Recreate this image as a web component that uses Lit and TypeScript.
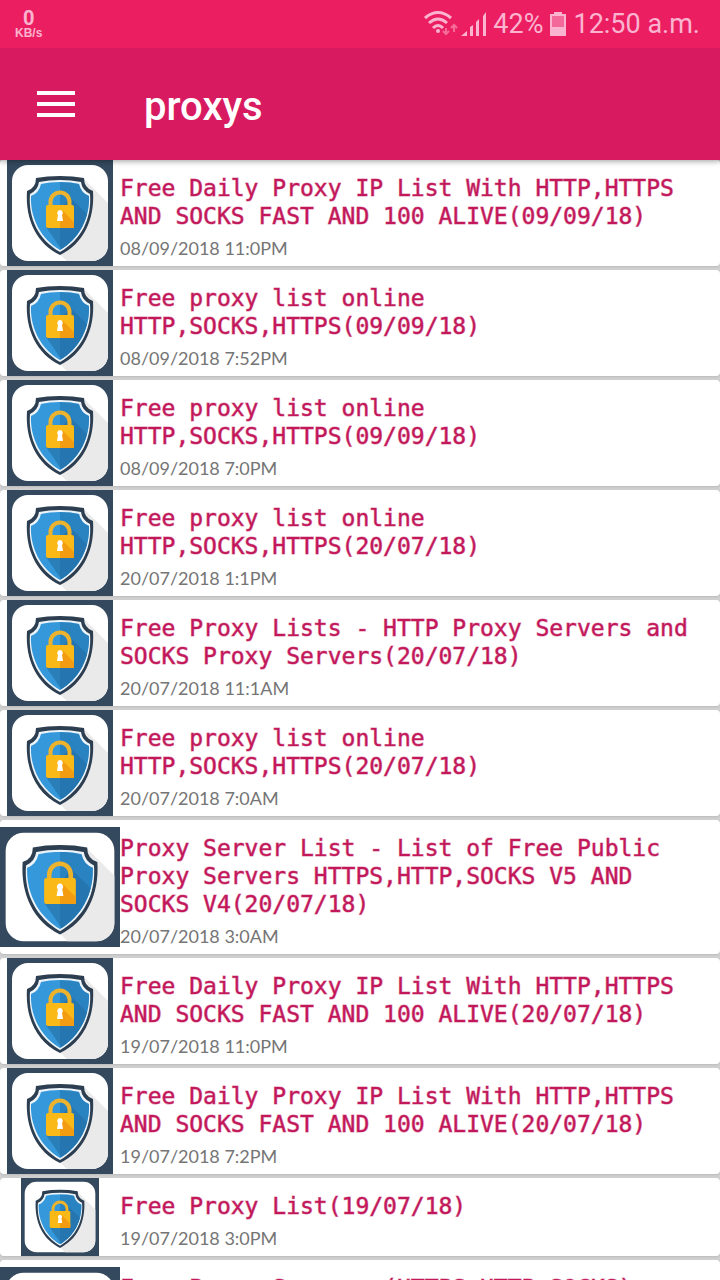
import { LitElement, html, css } from "lit";
import { customElement, property } from "lit/decorators.js";

interface Entry {
  title: string;
  date: string;
}

const ENTRIES: Entry[] = [
  { title: "Free Daily Proxy IP List With HTTP,HTTPS AND SOCKS FAST AND 100 ALIVE(09/09/18)", date: "08/09/2018 11:0PM" },
  { title: "Free proxy list online HTTP,SOCKS,HTTPS(09/09/18)", date: "08/09/2018 7:52PM" },
  { title: "Free proxy list online HTTP,SOCKS,HTTPS(09/09/18)", date: "08/09/2018 7:0PM" },
  { title: "Free proxy list online HTTP,SOCKS,HTTPS(20/07/18)", date: "20/07/2018 1:1PM" },
  { title: "Free Proxy Lists - HTTP Proxy Servers and SOCKS Proxy Servers(20/07/18)", date: "20/07/2018 11:1AM" },
  { title: "Free proxy list online HTTP,SOCKS,HTTPS(20/07/18)", date: "20/07/2018 7:0AM" },
  { title: "Proxy Server List - List of Free Public Proxy Servers HTTPS,HTTP,SOCKS V5 AND SOCKS V4(20/07/18)", date: "20/07/2018 3:0AM" },
  { title: "Free Daily Proxy IP List With HTTP,HTTPS AND SOCKS FAST AND 100 ALIVE(20/07/18)", date: "19/07/2018 11:0PM" },
  { title: "Free Daily Proxy IP List With HTTP,HTTPS AND SOCKS FAST AND 100 ALIVE(20/07/18)", date: "19/07/2018 7:2PM" },
  { title: "Free Proxy List(19/07/18)", date: "19/07/2018 3:0PM" },
  { title: "Free Proxy Servers (HTTPS,HTTP,SOCKS) Proxy Servers HTTPS,HTTP,SOCKS V5 AND SOCKS V4(19/07/18)", date: "19/07/2018 3:0PM" },
];

@customElement("shield-icon")
export class ShieldIcon extends LitElement {
  static styles = css`
    :host {
      display: flex;
      contain: size;
    }
    svg {
      flex: 1;
      min-width: 0;
      min-height: 0;
    }
  `;

  render() {
    return html`
      <svg viewBox="0 0 106 106" aria-hidden="true">
        <defs>
          <clipPath id="card"><rect x="5" y="5" width="96" height="96" rx="16" /></clipPath>
          <clipPath id="face">
            <path d="M53 22Q64 22 72 24Q74 33 82 36C83 58 72 79 53 90C34 79 23 58 24 36Q32 33 34 24Q42 22 53 22Z" />
          </clipPath>
        </defs>
        <rect width="106" height="106" fill="#34495e" />
        <rect x="5" y="5" width="96" height="96" rx="16" fill="#fff" />
        <path d="M76 18L112 54V112H70L53 94Z" fill="#eaeaeb" clip-path="url(#card)" />
        <path d="M53 16Q66 16 77 18Q77 28 86 31C88 60 76 84 53 95C30 84 18 60 20 31Q29 28 29 18Q40 16 53 16Z" fill="#2c3e50" />
        <path d="M53 20Q64 20 74 22Q75 30 83 34C85 59 74 80 53 92C32 80 21 59 23 34Q31 30 32 22Q42 20 53 20Z" fill="#ecf4fb" />
        <g clip-path="url(#face)">
          <rect width="106" height="106" fill="#3498db" />
          <path d="M63 37L106 80V106H66L39 67Z" fill="#2b7fb9" />
          <rect x="53" y="0" width="53" height="106" fill="#1f6da8" opacity=".5" />
        </g>
        <path d="M43.500 47V42a9.500 9.500 0 0 1 19 0V47" fill="none" stroke="#edb32d" stroke-width="4" />
        <rect x="39" y="45" width="28" height="23" rx="2" fill="#fbb917" />
        <path d="M56 51L67 62V68H53V60Z" fill="#f39c12" />
        <path d="M53 50a3 3 0 0 1 2 5l1 6h-6l1-6a3 3 0 0 1 2-5Z" fill="#fff" />
      </svg>
    `;
  }
}

@customElement("status-bar")
export class StatusBar extends LitElement {
  static styles = css`
    :host {
      display: flex;
      align-items: center;
      justify-content: space-between;
      height: 48px;
      padding: 0 20px 0 15px;
      background: #ec1e62;
      color: #fbb4cf;
      font-family: Roboto, "Liberation Sans", sans-serif;
    }
    .rate {
      display: grid;
      justify-items: center;
      font: bold 12px/12px "Liberation Sans", sans-serif;
    }
    .rate b {
      font: bold 20px/18px Roboto, sans-serif;
    }
    .right {
      display: flex;
      align-items: center;
      gap: 7px;
      font-size: 27px;
      line-height: 48px;
    }
    svg {
      flex: none;
    }
  `;

  render() {
    return html`
      <div class="rate"><b>0</b><span>KB/s</span></div>
      <div class="right">
        <svg width="62" height="28" viewBox="0 0 62 28" aria-hidden="true">
          <g fill="none" stroke="#fbb4cf" stroke-width="3">
            <path d="M1 8Q14-3 27 8" />
            <path d="M5 13Q14 5 23 13" />
            <path d="M9 18Q14 13 19 18" />
          </g>
          <circle cx="14" cy="21" r="2" fill="#fbb4cf" />
          <path d="M22 18v6m-3-3l3 3l3-3M30 22v-7m-3 3l3-3l3 3" fill="none" stroke="#f56c9b" stroke-width="2" />
          <path d="M37 26l6-5v5zM46 17l3-2v11h-3zM52 12l3-3v17h-3zM59 6l3-4v24h-3z" fill="#fbb4cf" />
        </svg>
        <span>42%</span>
        <svg width="16" height="24" viewBox="0 0 16 24" aria-hidden="true">
          <path d="M4 0h8v2h4v22H0V2h4z" fill="#fbb4cf" />
          <path d="M2 4h12v11H2z" fill="#f2699a" />
        </svg>
        <span>12:50 a.m.</span>
      </div>
    `;
  }
}

@customElement("proxy-card")
export class ProxyCard extends LitElement {
  @property({ attribute: false }) entry!: Entry;

  static styles = css`
    :host {
      display: block;
    }
    .card {
      display: grid;
      grid-template-columns: 120px minmax(0, 1fr);
      background: #fff;
      border-radius: 4px;
      box-shadow: 0 1px 2px #bbb;
      color: inherit;
      text-decoration: none;
    }
    .text {
      padding: 14px 16px 6px 0;
    }
    h2 {
      margin: 0;
      color: #c2185b;
      font: 23px/28px "DejaVu Sans Mono", monospace;
      -webkit-text-stroke: 1px rgb(194 24 91 / 50%);
    }
    time {
      display: block;
      margin-top: 6px;
      color: #757575;
      font: 18px/24px Lato, sans-serif;
    }
  `;

  render() {
    return html`
      <a class="card" href="#">
        <shield-icon></shield-icon>
        <div class="text">
          <h2>${this.entry.title}</h2>
          <time>${this.entry.date}</time>
        </div>
      </a>
    `;
  }
}

@customElement("app-root")
export class AppRoot extends LitElement {
  static styles = css`
    :host {
      display: flex;
      flex-direction: column;
      height: 100vh;
      overflow: hidden;
      background: #d0d0d0;
    }
    status-bar,
    header {
      flex: none;
    }
    status-bar {
      z-index: 2;
    }
    header {
      z-index: 1;
      display: flex;
      align-items: center;
      gap: 68px;
      height: 112px;
      padding: 0 36px;
      box-sizing: border-box;
      background: #d81b60;
      box-shadow: 0 1px 6px rgb(0 0 0 / 40%);
    }
    button {
      display: grid;
      padding: 0;
      border: 0;
      background: none;
    }
    h1 {
      margin: 0;
      padding-top: 6px;
      color: #fff;
      font: 500 40px/48px Roboto, sans-serif;
    }
    ul {
      display: grid;
      flex: 1;
      align-content: start;
      gap: 4px;
      min-height: 0;
      margin: 0;
      padding: 0;
      overflow-y: auto;
      list-style: none;
      scrollbar-width: none;
    }
  `;

  render() {
    return html`
      <status-bar></status-bar>
      <header>
        <button aria-label="Menu">
          <svg width="40" height="28" viewBox="0 0 40 28" aria-hidden="true">
            <path d="M1 3h38M1 14h38M1 25h38" stroke="#fff" stroke-width="4" />
          </svg>
        </button>
        <h1>proxys</h1>
      </header>
      <ul>
        ${ENTRIES.map((entry) => html`<li><proxy-card .entry=${entry}></proxy-card></li>`)}
      </ul>
    `;
  }
}
